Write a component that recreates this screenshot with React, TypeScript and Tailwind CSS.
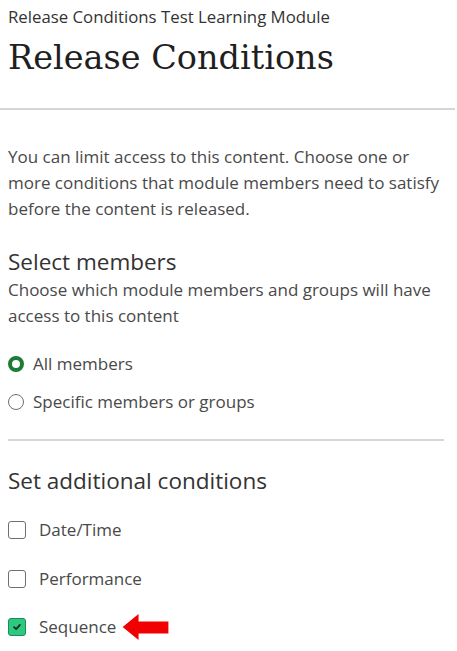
import React from 'react'

const sans = { fontFamily: '"Open Sans", "Noto Sans", sans-serif' }

function Radio({ checked, label }: { checked?: boolean; label: string }) {
  return (
    <label className="flex items-center gap-[9px] h-[22px] text-[17px] text-[#494949]">
      {checked ? (
        <span className="w-[16px] h-[16px] rounded-full border-[4px] border-[#1e7b36] bg-white" />
      ) : (
        <span className="w-[16px] h-[16px] rounded-full border border-[#6f6f6f] bg-white" />
      )}
      {label}
    </label>
  )
}

function Check({ checked, label, arrow }: { checked?: boolean; label: string; arrow?: boolean }) {
  return (
    <label className="flex items-center gap-[13px] h-[22px] text-[17px] text-[#494949]">
      {checked ? (
        <span className="w-[18px] h-[18px] rounded-[3px] border border-[#1f8a55] bg-[#2dc980] flex items-center justify-center">
          <svg viewBox="0 0 12 12" className="w-[10px] h-[10px]" fill="none" stroke="#1b2b22" strokeWidth="2.2" strokeLinecap="round" strokeLinejoin="round">
            <path d="M2.5 6.2 5 8.5 9.5 3.5" />
          </svg>
        </span>
      ) : (
        <span className="w-[18px] h-[18px] rounded-[3px] border border-[#6f6f6f] bg-white" />
      )}
      <span>{label}</span>
      {arrow && (
        <svg viewBox="0 0 50 30" className="w-[48px] h-[28px] -ml-[7px] shrink-0" aria-hidden="true">
          <path d="M0 15 L17 1 L17 9 L49 9 L49 22 L17 22 L17 29 Z" fill="#f00000" />
        </svg>
      )}
    </label>
  )
}

export default function App() {
  return (
    <div className="w-[457px] h-[651px] bg-white overflow-hidden" style={sans}>
      <div className="px-2 pt-[6px]">
        <p className="text-[16.8px] leading-[22px] text-[#333]">Release Conditions Test Learning Module</p>
        <h1
          className="text-[33.5px] leading-[44px] text-[#1f1f1f] mt-[8px]"
          style={{ fontFamily: '"DejaVu Serif", "Liberation Serif", serif' }}
        >
          Release Conditions
        </h1>
      </div>
      <div className="mt-[28px] h-[2px] bg-[#d6d6d6] mr-[2px]" />

      <div className="px-2">
        <p className="mt-[34px] text-[17px] leading-[26px] text-[#494949]">
          You can limit access to this content. Choose one or more conditions that module members need to satisfy before the content is released.
        </p>

        <h2 className="mt-[26px] text-[22.5px] leading-[28px] font-medium text-[#333]">Select members</h2>
        <p className="mt-[1px] text-[17px] leading-[26px] text-[#494949] pr-2">
          Choose which module members and groups will have access to this content
        </p>

        <div className="mt-[24px] flex flex-col gap-[16px]">
          <Radio checked label="All members" />
          <Radio label="Specific members or groups" />
        </div>

        <div className="mt-[26px] h-[2px] bg-[#d6d6d6] mr-[5px]" />

        <h2 className="mt-[26px] text-[22.5px] leading-[28px] font-medium text-[#333]">Set additional conditions</h2>

        <div className="mt-[24px] flex flex-col gap-[26.5px]">
          <Check label="Date/Time" />
          <Check label="Performance" />
          <Check checked label="Sequence" arrow />
        </div>
      </div>
    </div>
  )
}
